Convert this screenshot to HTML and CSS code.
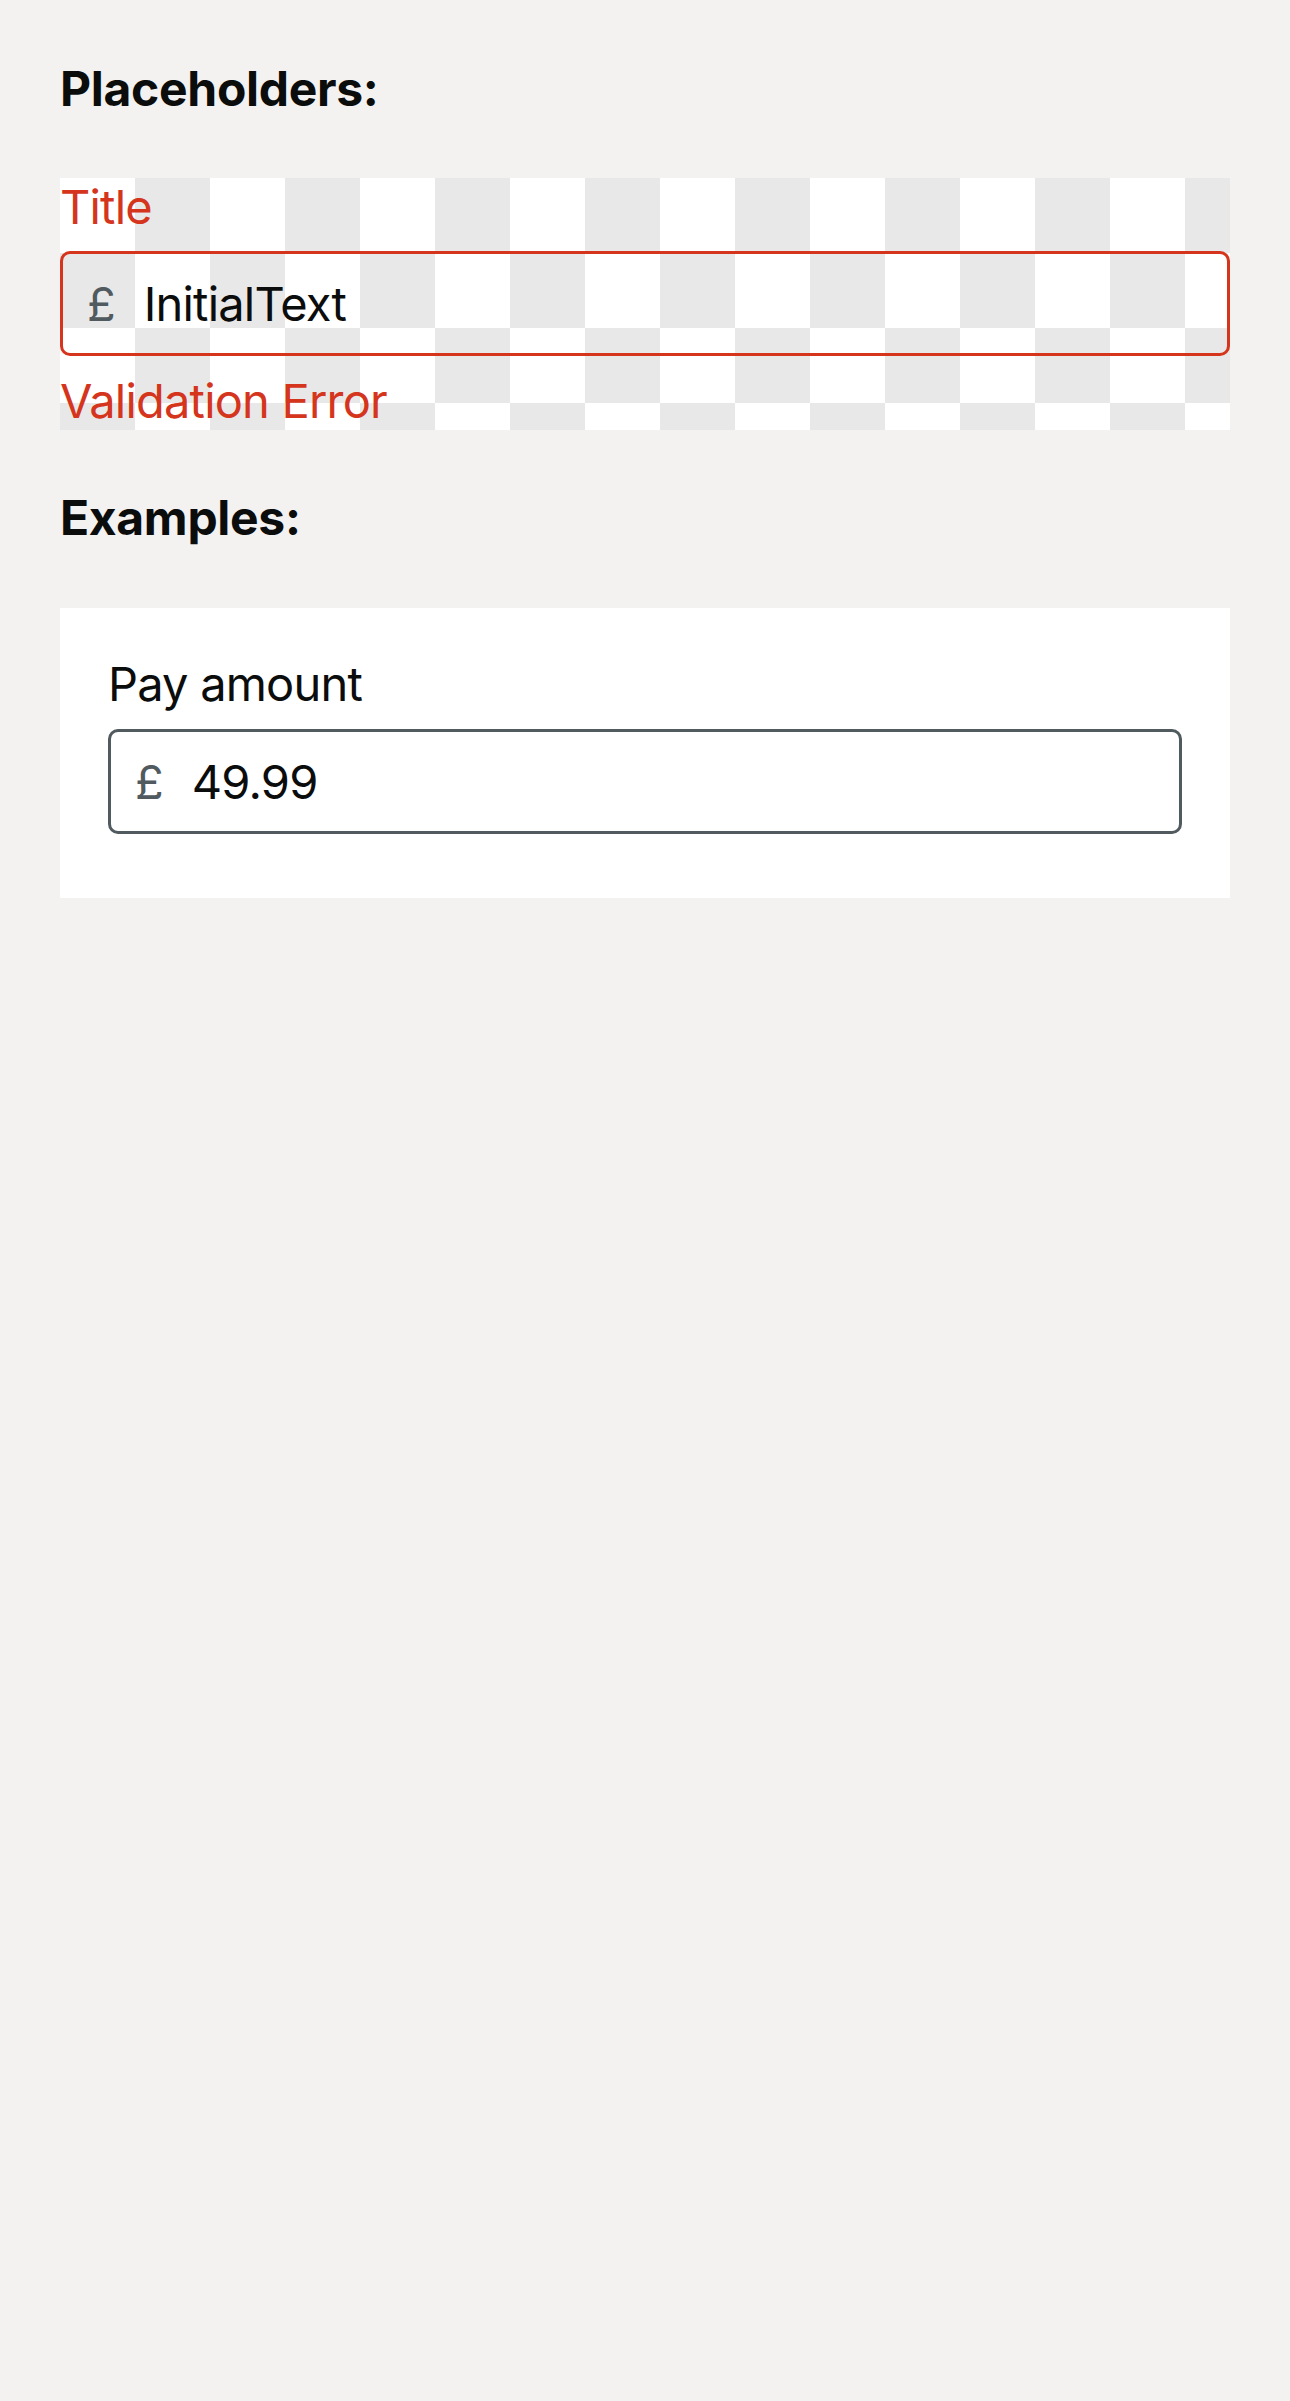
FILE: index.html
```html
<!DOCTYPE html>
<html lang="en">
<head>
<meta charset="utf-8">
<title>Currency text field</title>
<link rel="stylesheet" href="styles.css">
</head>
<body>
  <main class="page">
    <h2 class="section-title">Placeholders:</h2>
    <section class="placeholder-area">
      <div class="field field-error">
        <div class="field-label">Title</div>
        <div class="field-input">
          <span class="prefix">£</span>
          <span class="value">InitialText</span>
        </div>
        <div class="field-message">Validation Error</div>
      </div>
    </section>

    <h2 class="section-title section-title-second">Examples:</h2>
    <section class="card">
      <div class="field">
        <div class="field-label">Pay amount</div>
        <div class="field-input field-input-solid">
          <span class="prefix">£</span>
          <span class="value">49.99</span>
        </div>
      </div>
    </section>
  </main>
</body>
</html>
```

FILE: styles.css
```css
html, body {
  margin: 0;
  padding: 0;
}

body {
  background: #f3f2f1;
  color: #0b0c0c;
  font-family: Inter, "Noto Sans", "Liberation Sans", sans-serif;
  font-size: 47px;
  line-height: 58px;
  min-height: 2401px;
}

.page {
  padding: 60px 60px 0 60px;
}

.section-title {
  margin: 0 0 60px 0;
  font-size: 48px;
  line-height: 58px;
  font-weight: 700;
  letter-spacing: -0.3px;
}

.section-title-second {
  margin-top: 59px;
  margin-bottom: 61px;
}

.placeholder-area {
  background-color: #ffffff;
  background-image: conic-gradient(#e8e8e8 0 25%, #ffffff 0 50%, #e8e8e8 0 75%, #ffffff 0);
  background-size: 150px 150px;
  background-position: 0 0;
}

.field {
  display: flex;
  flex-direction: column;
}

.field-label {
  letter-spacing: -0.8px;
}

.field-input {
  margin-top: 15px;
  height: 105px;
  box-sizing: border-box;
  border: 3px solid #505a5f;
  border-radius: 10px;
  display: flex;
  align-items: center;
  padding: 0 0 0 24px;
  gap: 28px;
}

.prefix {
  color: #505a5f;
}

.value {
  letter-spacing: -0.8px;
}

.field-error .field-label,
.field-error .field-message {
  color: #d4351c;
}

.field-error .field-input {
  border-color: #d4351c;
  background: transparent;
}

.field-message {
  margin-top: 16px;
  letter-spacing: -0.8px;
}

.card {
  background: #ffffff;
  padding: 47px 48px 64px 48px;
}

.card .field-input {
  margin-top: 16px;
}

.field-input-solid {
  background: #ffffff;
}
```
